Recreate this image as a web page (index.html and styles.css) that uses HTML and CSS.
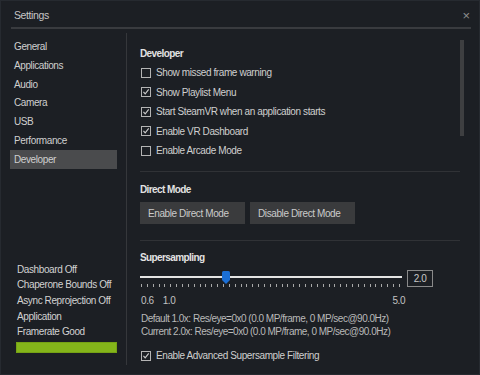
FILE: index.html
```html
<!DOCTYPE html>
<html>
  <head>
    <meta charset="UTF-8" />
    <title>Settings</title>
    <link rel="stylesheet" href="styles.css">
  </head>
  <body>
    <div class="window">
      <div class="titlebar">
        <span class="title">Settings</span>
        <span class="close">&times;</span>
      </div>
      <div class="top-rule"></div>

      <div class="main">
        <div class="sidebar">
          <div class="nav">
            <a>General</a>
            <a>Applications</a>
            <a>Audio</a>
            <a>Camera</a>
            <a>USB</a>
            <a>Performance</a>
            <a class="active">Developer</a>
          </div>
          <div class="status">
            <div>Dashboard Off</div>
            <div>Chaperone Bounds Off</div>
            <div>Async Reprojection Off</div>
            <div>Application</div>
            <div>Framerate Good</div>
            <div class="bar"></div>
          </div>
        </div>

        <div class="panel">
          <h3 class="sec-title first">Developer</h3>
          <div class="checks">
            <label class="check"><span class="box"></span>Show missed frame warning</label>
            <label class="check"><span class="box on"><svg viewBox="0 0 10 10"><path d="M1.8 4.8 L4 7.4 L8.4 1.8"/></svg></span>Show Playlist Menu</label>
            <label class="check"><span class="box on"><svg viewBox="0 0 10 10"><path d="M1.8 4.8 L4 7.4 L8.4 1.8"/></svg></span>Start SteamVR when an application starts</label>
            <label class="check"><span class="box on"><svg viewBox="0 0 10 10"><path d="M1.8 4.8 L4 7.4 L8.4 1.8"/></svg></span>Enable VR Dashboard</label>
            <label class="check"><span class="box"></span>Enable Arcade Mode</label>
          </div>

          <div class="rule r1"></div>

          <h3 class="sec-title dm">Direct Mode</h3>
          <div class="buttons">
            <button>Enable Direct Mode</button>
            <button>Disable Direct Mode</button>
          </div>

          <div class="rule r2"></div>

          <h3 class="sec-title ss">Supersampling</h3>
          <div class="slider-row">
            <div class="slider">
              <div class="track-area">
                <div class="track"></div>
                <svg class="thumb" viewBox="0 0 8 13"><path d="M0 1.5 Q0 0 1.5 0 H6.5 Q8 0 8 1.5 V9 L4 13 L0 9 Z"/></svg>
              </div>
              <div class="ticks">
                <i></i><i></i><i></i><i></i><i></i><i></i><i></i><i></i><i></i><i></i>
                <i></i><i></i><i></i><i></i><i></i><i></i><i></i><i></i><i></i><i></i>
                <i></i><i></i><i></i><i></i><i></i><i></i><i></i><i></i><i></i><i></i>
                <i></i><i></i><i></i><i></i><i></i><i></i><i></i><i></i><i></i><i></i>
                <i></i><i></i><i></i><i></i><i></i>
              </div>
            </div>
            <div class="value">2.0</div>
          </div>
          <div class="scale">
            <span>0.6</span>
            <span class="s1">1.0</span>
            <span class="s5">5.0</span>
          </div>
          <div class="info">
            <div>Default 1.0x: Res/eye=0x0 (0.0 MP/frame, 0 MP/sec@90.0Hz)</div>
            <div>Current 2.0x: Res/eye=0x0 (0.0 MP/frame, 0 MP/sec@90.0Hz)</div>
          </div>
          <label class="check last"><span class="box on"><svg viewBox="0 0 10 10"><path d="M1.8 4.8 L4 7.4 L8.4 1.8"/></svg></span>Enable Advanced Supersample Filtering</label>
        </div>

        <div class="scrollbar"></div>
      </div>
    </div>
  </body>
</html>
```

FILE: styles.css
```css
* {
  padding: 0px;
  margin: 0px;
  box-sizing: border-box;
}

body {
  --bg: #1c1f24;
  --line: #393b3f;
  --text: #cfcfcf;
  --head: #e2e2e2;
  background: var(--bg);
  font-family: "Liberation Sans", Arial, sans-serif;
  font-size: 10px;
  letter-spacing: -0.4px;
  color: var(--text);
}

.window {
  width: 480px;
  height: 375px;
  background: var(--bg);
  box-shadow: inset 0 0 0 1px #262a30;
  overflow: hidden;
}

.titlebar {
  height: 27px;
  padding: 3px 10px 0 14px;
  display: flex;
  align-items: center;
  justify-content: space-between;
}
.title {
  font-size: 10.5px;
  color: #c6c6c6;
}
.close {
  font-size: 13px;
  color: #8e8e8e;
  letter-spacing: 0;
}

.top-rule {
  height: 2px;
  margin: 0 9px 0 11px;
  background: var(--line);
}

.main {
  display: flex;
  height: 346px;
}

/* left column */
.sidebar {
  width: 127px;
  height: 332px;
  margin-top: 4px;
  padding: 4px 0 12px 0;
  border-right: 1px solid #35373b;
  display: flex;
  flex-direction: column;
}
.nav a {
  display: block;
  height: 18.8px;
  line-height: 18.8px;
  margin: 0 9px 0 10px;
  padding: 1px 0 0 4px;
  color: var(--text);
}
.nav a.active {
  background: #4a4b4d;
}

.status {
  margin-top: auto;
  padding-left: 17px;
}
.status div {
  height: 15.7px;
  line-height: 15.7px;
  padding-top: 1px;
  color: #d2d2d2;
}
.status .bar {
  width: 101px;
  height: 11px;
  margin: 3px 0 0 -1px;
  padding: 0;
  background: #84b51a;
  border: 1px solid #76a215;
}

/* right column */
.panel {
  width: 320px;
  margin-left: 13px;
  padding-top: 16px;
}

.sec-title {
  font-size: 10px;
  font-weight: bold;
  letter-spacing: -0.6px;
  line-height: 16px;
  padding-top: 1px;
  color: var(--head);
}
.sec-title.dm { margin-top: 9px; }
.sec-title.ss { margin-top: 8px; }

.checks {
  margin-top: 1px;
}
.check {
  display: flex;
  align-items: center;
  height: 19.5px;
  padding-left: 1px;
}
.box {
  width: 10px;
  height: 10px;
  margin-right: 5px;
  border: 1px solid #b4b4b4;
  display: flex;
}
.box svg {
  width: 8px;
  height: 8px;
  fill: none;
  stroke: #cdcdcd;
  stroke-width: 1.4;
}
.check.last {
  margin-top: 7.75px;
}

.rule {
  height: 1px;
  background: #303236;
}
.rule.r1 { margin-top: 10.5px; }
.rule.r2 { margin-top: 16px; }

.buttons {
  display: flex;
  gap: 5px;
  margin-top: 4px;
}
.buttons button {
  width: 105px;
  height: 22px;
  border: none;
  background: #3a3b3d;
  color: #cbcbcb;
  font-family: inherit;
  font-size: 10px;
  letter-spacing: -0.4px;
  text-align: left;
  padding: 1px 0 0 8px;
}

.slider-row {
  display: flex;
  margin-top: 4px;
}
.slider {
  width: 262px;
}
.track-area {
  position: relative;
  height: 14px;
}
.track {
  position: absolute;
  left: 0;
  right: 0;
  top: 6px;
  height: 2px;
  background: #e4e4e4;
}
.thumb {
  position: absolute;
  left: 82px;
  top: 1px;
  width: 8px;
  height: 13px;
  fill: #1b6fd6;
}
.ticks {
  display: flex;
  justify-content: space-between;
  width: 259px;
  margin-left: 1px;
  height: 3px;
}
.ticks i {
  width: 1px;
  background: #a9a9a9;
}
.value {
  width: 26px;
  height: 17px;
  margin-left: 5px;
  border: 1px solid #8a8a8a;
  color: #c8c8c8;
  text-align: center;
  line-height: 15px;
}

.scale {
  display: flex;
  margin-top: 7px;
  padding-left: 1px;
  line-height: 13px;
  color: #c2c2c2;
}
.scale .s1 { margin-left: 9px; }
.scale .s5 { margin-left: 217px; }

.info {
  margin-top: 5px;
  padding-left: 1px;
  line-height: 13px;
  color: #b9b9b9;
  letter-spacing: -0.5px;
}

.scrollbar {
  width: 4px;
  height: 96px;
  margin-top: 11px;
  background: #3e3f41;
}
```
